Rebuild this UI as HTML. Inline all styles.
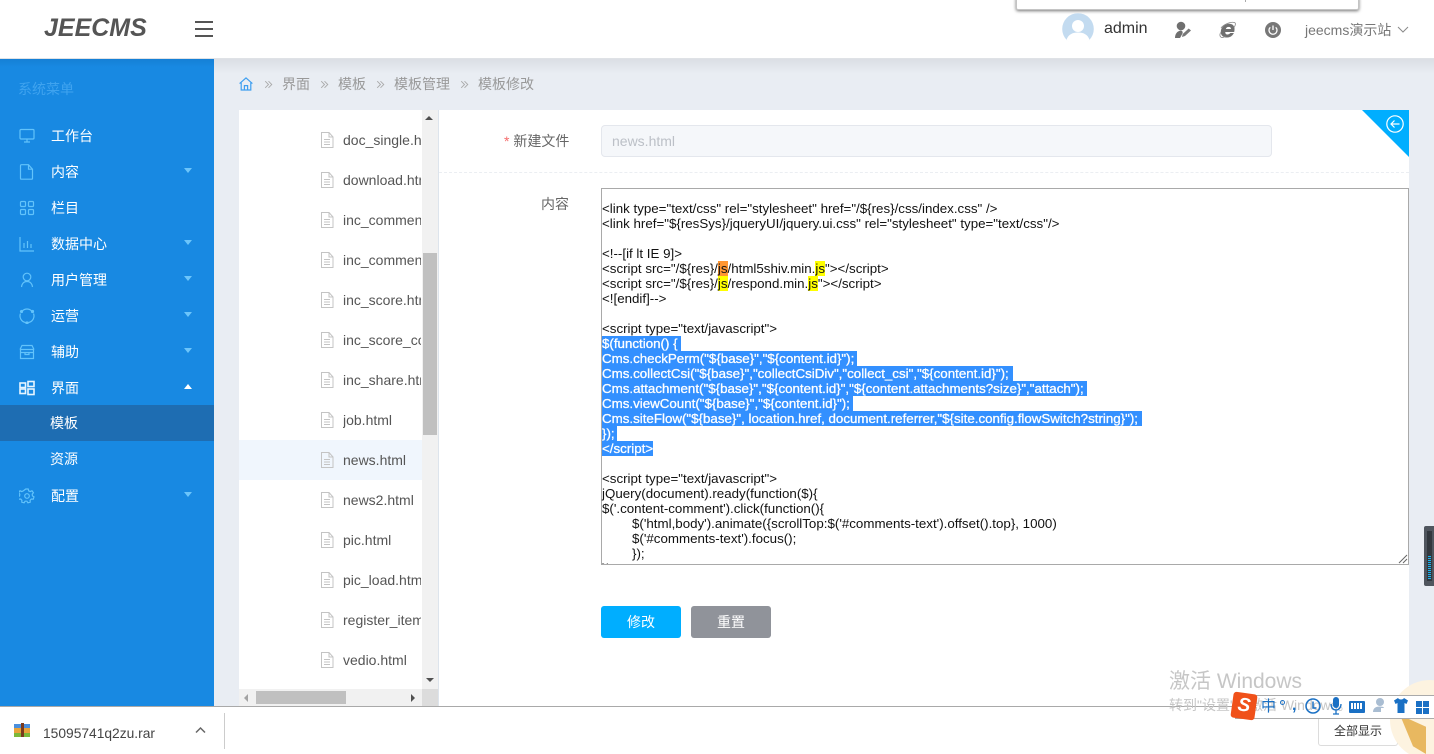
<!DOCTYPE html>
<html lang="zh"><head><meta charset="utf-8"><title>JEECMS</title>
<style>
html,body{margin:0;padding:0;width:1434px;height:754px;overflow:hidden;background:#e9edf3}
body{font-family:"Liberation Sans","Noto Sans CJK SC",sans-serif;position:relative}
div,span,svg{position:absolute;box-sizing:border-box}
.t{white-space:nowrap}
.m{left:51px;color:#fff;font-size:14px;line-height:20px;height:20px}
.mi{left:19px;width:16px;height:16px;fill:none;stroke:#62c3fb;stroke-width:1.2}
.ar{left:184px;width:0;height:0;border-left:4px solid transparent;border-right:4px solid transparent;border-top:5px solid #6cc5fb}
.bc{top:75px;font-size:14px;line-height:18px;color:#999}
.bs{top:80px;width:9px;height:9px;fill:none;stroke:#aaa;stroke-width:1.1}
.f{left:343px;width:78px;overflow:hidden;font-size:14px;line-height:20px;color:#555;white-space:nowrap}
.fi{left:320px;width:14px;height:16px;fill:none;stroke:#c4c4c4;stroke-width:1}
.l{left:602px;font-size:13.33px;line-height:15px;height:15px;color:#111;white-space:pre}
.s{left:602px;height:15px;background:#3390ff}
.w{color:#fff;-webkit-text-stroke:.3px #fff}
mark{background:#ff0;color:#111}
</style></head><body>

<!-- main page content -->
<div style="left:214px;top:58px;width:1220px;height:30px;background:linear-gradient(#dadde3,#e9edf3 16px)"></div>

<!-- breadcrumb -->
<svg style="left:239px;top:77px;width:14px;height:14px;fill:none;stroke:#3f9ff0;stroke-width:1.2" viewBox="0 0 14 14"><path d="M.6 6.6 7 .9l6.4 5.7M2.200 5.800V13h9.600V5.800M5.400 13V8.600h3.200V13"/></svg>
<svg class="bs" style="left:264px" viewBox="0 0 10 11"><path d="M1 1.500 5 5.500 1 9.500M5 1.500 9 5.500 5 9.500"/></svg>
<div class="bc t" style="left:282px">界面</div>
<svg class="bs" style="left:320px" viewBox="0 0 10 11"><path d="M1 1.500 5 5.500 1 9.500M5 1.500 9 5.500 5 9.500"/></svg>
<div class="bc t" style="left:338px">模板</div>
<svg class="bs" style="left:376px" viewBox="0 0 10 11"><path d="M1 1.500 5 5.500 1 9.500M5 1.500 9 5.500 5 9.500"/></svg>
<div class="bc t" style="left:394px">模板管理</div>
<svg class="bs" style="left:460px" viewBox="0 0 10 11"><path d="M1 1.500 5 5.500 1 9.500M5 1.500 9 5.500 5 9.500"/></svg>
<div class="bc t" style="left:478px">模板修改</div>

<!-- file tree panel -->
<div style="left:239px;top:110px;width:200px;height:597px;background:#fff"></div>
<div style="left:239px;top:440px;width:183px;height:40px;background:#f0f6fd"></div>
<div style="left:422px;top:110px;width:17px;height:579px;background:#f1f1f1"></div>
<div style="left:423px;top:253px;width:14px;height:182px;background:#c0c0c0"></div>
<div style="left:425px;top:116px;width:0;height:0;border-left:4px solid transparent;border-right:4px solid transparent;border-bottom:4px solid #505050"></div>
<div style="left:426px;top:678px;width:0;height:0;border-left:4px solid transparent;border-right:4px solid transparent;border-top:4px solid #505050"></div>
<div style="left:239px;top:689px;width:183px;height:18px;background:#f1f1f1"></div>
<div style="left:256px;top:691px;width:90px;height:13px;background:#c0c0c0"></div>
<div style="left:244px;top:694px;width:0;height:0;border-top:4px solid transparent;border-bottom:4px solid transparent;border-right:4px solid #a3a3a3"></div>
<div style="left:411px;top:694px;width:0;height:0;border-top:4px solid transparent;border-bottom:4px solid transparent;border-left:4px solid #505050"></div>
<div style="left:422px;top:689px;width:17px;height:18px;background:#dcdcdc"></div>
<div style="left:438px;top:110px;width:1px;height:597px;background:#dde4ec"></div>

<svg class="fi" style="top:132px" viewBox="0 0 14 16"><path d="M1.500.5h7.500l4 4.500v10.500h-11.500zM9 .5V5h4M4 7.500h6M4 10h6M4 12.500h6"/></svg><div class="f" style="top:130px">doc_single.html</div>
<svg class="fi" style="top:172px" viewBox="0 0 14 16"><path d="M1.500.5h7.500l4 4.500v10.500h-11.500zM9 .5V5h4M4 7.500h6M4 10h6M4 12.500h6"/></svg><div class="f" style="top:170px">download.html</div>
<svg class="fi" style="top:212px" viewBox="0 0 14 16"><path d="M1.500.5h7.500l4 4.500v10.500h-11.500zM9 .5V5h4M4 7.500h6M4 10h6M4 12.500h6"/></svg><div class="f" style="top:210px">inc_comment.html</div>
<svg class="fi" style="top:252px" viewBox="0 0 14 16"><path d="M1.500.5h7.500l4 4.500v10.500h-11.500zM9 .5V5h4M4 7.500h6M4 10h6M4 12.500h6"/></svg><div class="f" style="top:250px">inc_comment2.html</div>
<svg class="fi" style="top:292px" viewBox="0 0 14 16"><path d="M1.500.5h7.500l4 4.500v10.500h-11.500zM9 .5V5h4M4 7.500h6M4 10h6M4 12.500h6"/></svg><div class="f" style="top:290px">inc_score.html</div>
<svg class="fi" style="top:332px" viewBox="0 0 14 16"><path d="M1.500.5h7.500l4 4.500v10.500h-11.500zM9 .5V5h4M4 7.500h6M4 10h6M4 12.500h6"/></svg><div class="f" style="top:330px">inc_score_count.html</div>
<svg class="fi" style="top:372px" viewBox="0 0 14 16"><path d="M1.500.5h7.500l4 4.500v10.500h-11.500zM9 .5V5h4M4 7.500h6M4 10h6M4 12.500h6"/></svg><div class="f" style="top:370px">inc_share.html</div>
<svg class="fi" style="top:412px" viewBox="0 0 14 16"><path d="M1.500.5h7.500l4 4.500v10.500h-11.500zM9 .5V5h4M4 7.500h6M4 10h6M4 12.500h6"/></svg><div class="f" style="top:410px">job.html</div>
<svg class="fi" style="top:452px" viewBox="0 0 14 16"><path d="M1.500.5h7.500l4 4.500v10.500h-11.500zM9 .5V5h4M4 7.500h6M4 10h6M4 12.500h6"/></svg><div class="f" style="top:450px">news.html</div>
<svg class="fi" style="top:492px" viewBox="0 0 14 16"><path d="M1.500.5h7.500l4 4.500v10.500h-11.500zM9 .5V5h4M4 7.500h6M4 10h6M4 12.500h6"/></svg><div class="f" style="top:490px">news2.html</div>
<svg class="fi" style="top:532px" viewBox="0 0 14 16"><path d="M1.500.5h7.500l4 4.500v10.500h-11.500zM9 .5V5h4M4 7.500h6M4 10h6M4 12.500h6"/></svg><div class="f" style="top:530px">pic.html</div>
<svg class="fi" style="top:572px" viewBox="0 0 14 16"><path d="M1.500.5h7.500l4 4.500v10.500h-11.500zM9 .5V5h4M4 7.500h6M4 10h6M4 12.500h6"/></svg><div class="f" style="top:570px">pic_load.html</div>
<svg class="fi" style="top:612px" viewBox="0 0 14 16"><path d="M1.500.5h7.500l4 4.500v10.500h-11.500zM9 .5V5h4M4 7.500h6M4 10h6M4 12.500h6"/></svg><div class="f" style="top:610px">register_item.html</div>
<svg class="fi" style="top:652px" viewBox="0 0 14 16"><path d="M1.500.5h7.500l4 4.500v10.500h-11.500zM9 .5V5h4M4 7.500h6M4 10h6M4 12.500h6"/></svg><div class="f" style="top:650px">vedio.html</div>

<!-- form panel -->
<div style="left:439px;top:110px;width:970px;height:597px;background:#fff"></div>
<div style="left:1362px;top:110px;width:47px;height:47px;background:#00aeff;clip-path:polygon(0 0,100% 0,100% 100%)"></div>
<svg style="left:1386px;top:115px;width:18px;height:18px;fill:none;stroke:#fff;stroke-width:1.200" viewBox="0 0 18 18"><circle cx="9" cy="9" r="8.200"/><path d="M13.500 9H5M8.500 5.500 5 9l3.500 3.500"/></svg>
<div class="t" style="left:504px;top:132px;font-size:14px;line-height:18px;color:#666"><span style="position:static;color:#f56c6c">*</span> 新建文件</div>
<div style="left:601px;top:125px;width:671px;height:32px;background:#f5f7fa;border:1px solid #e4e7ed;border-radius:4px"></div>
<div class="t" style="left:612px;top:132px;font-size:14px;line-height:18px;color:#bcc0c7">news.html</div>
<div style="left:439px;top:172px;width:970px;height:0;border-top:1px dashed #ebeef2"></div>
<div class="t" style="left:541px;top:195px;font-size:14px;line-height:18px;color:#666">内容</div>

<!-- textarea -->
<div style="left:601px;top:188px;width:808px;height:377px;border:1px solid #a9a9a9;background:#fff"></div>
<div class="l" style="top:201px">&lt;link type="text/css" rel="stylesheet" href="/${res}/css/index.css" /&gt;</div>
<div class="l" style="top:216px">&lt;link href="${resSys}/jqueryUI/jquery.ui.css" rel="stylesheet" type="text/css"/&gt;</div>
<div class="l" style="top:246px">&lt;!--[if lt IE 9]&gt;</div>
<div class="l" style="top:261px">&lt;script src="/${res}/<mark style="background:#ff9632">js</mark>/html5shiv.min.<mark>js</mark>"&gt;&lt;/script&gt;</div>
<div class="l" style="top:276px">&lt;script src="/${res}/<mark>js</mark>/respond.min.<mark>js</mark>"&gt;&lt;/script&gt;</div>
<div class="l" style="top:291px">&lt;![endif]--&gt;</div>
<div class="l" style="top:321px">&lt;script type="text/javascript"&gt;</div>
<div class="s" style="top:336px;width:79px"></div>
<div class="s" style="top:351px;width:255px"></div>
<div class="s" style="top:366px;width:411px"></div>
<div class="s" style="top:381px;width:485px"></div>
<div class="s" style="top:396px;width:251px"></div>
<div class="s" style="top:411px;width:540px"></div>
<div class="s" style="top:426px;width:15px"></div>
<div class="s" style="top:441px;width:51px"></div>
<div class="l w" style="top:336px">$(function() {</div>
<div class="l w" style="top:351px">Cms.checkPerm("${base}","${content.id}");</div>
<div class="l w" style="top:366px">Cms.collectCsi("${base}","collectCsiDiv","collect_csi","${content.id}");</div>
<div class="l w" style="top:381px">Cms.attachment("${base}","${content.id}","${content.attachments?size}","attach");</div>
<div class="l w" style="top:396px">Cms.viewCount("${base}","${content.id}");</div>
<div class="l w" style="top:411px">Cms.siteFlow("${base}", location.href, document.referrer,"${site.config.flowSwitch?string}");</div>
<div class="l w" style="top:426px">});</div>
<div class="l w" style="top:441px">&lt;/script&gt;</div>
<div class="l" style="top:471px">&lt;script type="text/javascript"&gt;</div>
<div class="l" style="top:486px">jQuery(document).ready(function($){</div>
<div class="l" style="top:501px">$('.content-comment').click(function(){</div>
<div class="l" style="top:516px;left:632px">$('html,body').animate({scrollTop:$('#comments-text').offset().top}, 1000)</div>
<div class="l" style="top:531px;left:632px">$('#comments-text').focus();</div>
<div class="l" style="top:546px;left:632px">});</div>
<div class="l" style="top:561px;height:3px;overflow:hidden">});</div>
<svg style="left:1398px;top:554px;width:10px;height:10px;stroke:#666;stroke-width:1;fill:none" viewBox="0 0 10 10"><path d="M1 9 9 1M5 9 9 5"/></svg>

<!-- buttons -->
<div style="left:601px;top:606px;width:80px;height:32px;background:#00aeff;border-radius:3px;color:#fff;font-size:14px;line-height:32px;text-align:center">修改</div>
<div style="left:691px;top:606px;width:80px;height:32px;background:#90939a;border-radius:3px;color:#fff;font-size:14px;line-height:32px;text-align:center">重置</div>

<!-- sidebar -->
<div style="left:0;top:58px;width:214px;height:649px;background:#1889e2"></div>
<div style="left:0;top:59px;width:214px;height:8px;background:linear-gradient(rgba(0,60,120,.12),rgba(0,60,120,0))"></div>
<div style="left:0;top:405px;width:214px;height:36px;background:#1e6db2"></div>
<div class="t" style="left:18px;top:80px;font-size:14px;line-height:18px;color:#3fa3ef">系统菜单</div>

<svg class="mi" style="top:128px" viewBox="0 0 16 16"><rect x="1" y="1.500" width="14" height="9.500" rx="1"/><path d="M5 14h6M8 11v3"/></svg><div class="m t" style="top:126px">工作台</div>
<svg class="mi" style="top:164px" viewBox="0 0 16 16"><path d="M2.500.7h7l4 4.500v9c0 .6-.4 1-1 1h-10c-.6 0-1-.4-1-1V1.700c0-.6.400-1 1-1zM9.500.7v4.500h4"/></svg><div class="m t" style="top:162px">内容</div><div class="ar" style="top:168px"></div>
<svg class="mi" style="top:200px" viewBox="0 0 16 16"><rect x="1.500" y="1.500" width="5" height="5" rx="1"/><rect x="9.500" y="1.500" width="5" height="5" rx="1"/><rect x="1.500" y="9.500" width="5" height="5" rx="1"/><rect x="9.500" y="9.500" width="5" height="5" rx="1"/></svg><div class="m t" style="top:198px">栏目</div>
<svg class="mi" style="top:236px" viewBox="0 0 16 16"><path d="M1 1v14h14M5 12V7M8.500 12V5M12 12V8"/></svg><div class="m t" style="top:234px">数据中心</div><div class="ar" style="top:240px"></div>
<svg class="mi" style="top:272px" viewBox="0 0 16 16"><circle cx="8" cy="5" r="3.800"/><path d="M2.500 15c.4-3.500 2.500-5.500 5.500-5.500s5.100 2 5.500 5.500"/></svg><div class="m t" style="top:270px">用户管理</div><div class="ar" style="top:276px"></div>
<svg class="mi" style="top:308px" viewBox="0 0 16 16"><path d="M3.500 2.800A6.600 6.600 0 0 1 12.500 2.800M14.500 5.500A6.600 6.600 0 0 1 9.500 14.500M6.500 14.500A6.600 6.600 0 0 1 1.500 5.500"/><circle cx="2.500" cy="3.500" r="1" fill="#62c3fb"/><circle cx="13.500" cy="3.500" r="1" fill="#62c3fb"/><circle cx="8" cy="15" r="1" fill="#62c3fb"/></svg><div class="m t" style="top:306px">运营</div><div class="ar" style="top:312px"></div>
<svg class="mi" style="top:344px" viewBox="0 0 16 16"><path d="M1.500 5.500h13v9h-13zM1 5.500 3 1.500h10l2 4M1.500 8.500h13M6 8.500v2h4v-2"/></svg><div class="m t" style="top:342px">辅助</div><div class="ar" style="top:348px"></div>
<svg class="mi" style="top:380px;stroke:#e8f5ff;stroke-width:1.600" viewBox="0 0 16 16"><rect x="1" y="3" width="5.500" height="4.500"/><rect x="1" y="9" width="5.500" height="4.500"/><rect x="9" y="1.500" width="6" height="5"/><rect x="9" y="9" width="6" height="5.500"/></svg><div class="m t" style="top:378px">界面</div><div class="ar" style="top:384px;border-top:0;border-bottom:5px solid #fff"></div>
<div class="m t" style="left:50px;top:413px">模板</div>
<div class="m t" style="left:50px;top:449px">资源</div>
<svg class="mi" style="top:488px" viewBox="0 0 16 16"><circle cx="8" cy="8" r="2.300"/><path d="M6.800 1h2.400l.5 1.900 1.500.7 1.800-.8 1.400 1.900-1.200 1.500.2 1.700 1.600 1-.8 2.300-1.900-.2-1.200 1.300.1 1.900-2.300.6-1-1.600h-1.800l-1 1.600-2.300-.6.1-1.900-1.200-1.300-1.900.2-.8-2.300 1.600-1 .2-1.700-1.200-1.500 1.400-1.900 1.800.8 1.500-.7z"/></svg><div class="m t" style="top:486px">配置</div><div class="ar" style="top:492px"></div>

<!-- header -->
<div style="left:0;top:0;width:1434px;height:59px;background:#fff;border-bottom:1px solid #dfe2e6"></div>
<div class="t" style="left:44px;top:12px;font-size:25px;line-height:32px;font-weight:bold;font-style:italic;color:#555">JEECMS</div>
<div style="left:195px;top:21px;width:18px;height:2px;background:#555"></div>
<div style="left:195px;top:28px;width:18px;height:2px;background:#555"></div>
<div style="left:195px;top:35px;width:18px;height:2px;background:#555"></div>

<div style="left:1016px;top:-4px;width:343px;height:14px;background:#fff;border:1px solid #c4c4c4;border-radius:2px;box-shadow:0 1px 3px rgba(0,0,0,.55)"></div>
<div style="left:1245px;top:0;width:1px;height:2px;background:#aaa"></div>

<svg style="left:1062px;top:13px;width:32px;height:32px" viewBox="0 0 32 32"><circle cx="16" cy="16" r="15.800" fill="#c3dbf0"/><circle cx="16" cy="13" r="6" fill="#fff"/><path d="M4.500 27c1.500-5.500 6-7.500 11.500-7.500S26 21.500 27.500 27a15 15 0 0 1-23 0z" fill="#fff"/></svg>
<div class="t" style="left:1104px;top:19px;font-size:16px;line-height:20px;color:#333">admin</div>
<svg style="left:1174px;top:21px;width:18px;height:18px" viewBox="0 0 18 18"><circle cx="7" cy="5" r="4.300" fill="#6f6f6f"/><path d="M1 17c0-4 2-7 6-7.500 1.500.5 2 1.500 1.500 3L6 17z" fill="#6f6f6f"/><path d="M8 16l.7-3 6-5.500 2.300 2-6 5.500z" fill="#777"/></svg>
<svg style="left:1219px;top:21px;width:18px;height:18px" viewBox="0 0 18 18"><g transform="translate(2 0) skewX(-8)"><path d="M1.500 10c0-4.500 3.500-7 7-7 3.800 0 6 2.600 6 6.500v1.300H5.500c.2 2 1.500 3 3 3 1.200 0 2-.5 2.700-1.500h3c-1 2.800-3.300 4-5.800 4-3.800 0-6.900-2.300-6.900-6.300zM5.600 8.300h5.800c-.1-1.600-1.300-2.700-2.900-2.700-1.500 0-2.700 1.100-2.900 2.700z" fill="#6f6f6f" stroke="#6f6f6f" stroke-width=".5"/></g><path d="M2 7C5 3 12 .5 15.500 1.500c1.500.6 1 3-.5 5M1.500 11.500C.5 14 .8 16 2.500 16.500c1.500.3 3-.5 4-1.200" fill="none" stroke="#888" stroke-width=".8"/></svg>
<svg style="left:1265px;top:22px;width:16px;height:16px" viewBox="0 0 16 16"><circle cx="8" cy="8" r="8" fill="#777"/><path d="M5.300 5.300a4 4 0 1 0 5.400 0" fill="none" stroke="#fff" stroke-width="1.300"/><path d="M8 3.500v4.500" stroke="#fff" stroke-width="1.300"/></svg>
<div class="t" style="left:1305px;top:21px;font-size:14px;line-height:18px;color:#777">jeecms演示站</div>
<svg style="left:1397px;top:26px;width:12px;height:8px;fill:none;stroke:#8a8a8a;stroke-width:1" viewBox="0 0 12 8"><path d="M1 1l5 5 5-5"/></svg>

<!-- meter at right -->
<div style="left:1424px;top:526px;width:10px;height:60px;background:#50565e;border-radius:2px 0 0 2px"></div>
<div style="left:1427px;top:531px;width:5px;height:50px;background:#33383e"></div>
<div style="left:1428px;top:556px;width:3px;height:24px;background:repeating-linear-gradient(#17b3f0 0 1px,#33383e 1px 2px)"></div>

<!-- download bar -->
<div style="left:0;top:706px;width:1434px;height:48px;background:#fff;border-top:1px solid #a9a9a9"></div>
<svg style="left:14px;top:723px;width:16px;height:15px" viewBox="0 0 16 15"><rect x="0" y="1" width="16" height="5" fill="#4b8fdc"/><rect x="0" y="5" width="16" height="6" fill="#e8a33a"/><rect x="0" y="10" width="16" height="4" fill="#7cb83a"/><rect x="7" y="0" width="3" height="14" fill="#7a3a1c"/></svg>
<div class="t" style="left:43px;top:725px;font-size:13.8px;line-height:18px;color:#444">15095741q2zu.rar</div>
<svg style="left:195px;top:726px;width:11px;height:8px;fill:none;stroke:#666;stroke-width:1.500" viewBox="0 0 11 8"><path d="M1 6.500 5.500 2 10 6.500"/></svg>
<div style="left:224px;top:713px;width:1px;height:36px;background:#ccc"></div>

<!-- full display button -->
<div style="left:1318px;top:716px;width:80px;height:30px;background:#fff;border:1px solid #dcdcdc;border-radius:3px"></div>
<div class="t" style="left:1334px;top:722px;font-size:12px;line-height:18px;color:#333">全部显示</div>

<!-- decoration corner -->
<div style="left:1390px;top:680px;width:80px;height:80px;border-radius:50%;background:#fdf3e0"></div>
<div style="left:1400px;top:715px;width:26px;height:39px;background:#e8b860;clip-path:polygon(0 0,100% 30%,100% 100%,50% 80%)"></div>

<!-- IME bar background -->
<div style="left:1235px;top:695px;width:199px;height:24px;border:1px solid #aaa;border-right:0;background:#fff"></div>

<!-- windows watermark -->
<div class="t" style="left:1169px;top:670px;font-size:21px;line-height:24px;color:#c6c6c6">激活 Windows</div>
<div class="t" style="left:1169px;top:696px;font-size:14px;line-height:18px;color:#c6c6c6">转到"设置"以激活 Windows。</div>

<!-- IME toolbar -->
<div style="left:1232px;top:693px;width:24px;height:26px;background:#f0511a;border-radius:3px;transform:rotate(8deg);color:#fff;font-size:19px;font-weight:bold;line-height:25px;text-align:center;font-style:italic">S</div>
<div class="t" style="left:1261px;top:698px;font-size:15px;line-height:18px;color:#1a70c4">中</div>
<div style="left:1280px;top:700px;width:5px;height:5px;border:1px solid #1a70c4;border-radius:50%"></div>
<div class="t" style="left:1292px;top:697px;font-size:16px;line-height:18px;color:#1a70c4;font-weight:bold">,</div>
<svg style="left:1305px;top:698px;width:16px;height:16px;fill:none;stroke:#1a70c4;stroke-width:1.500" viewBox="0 0 16 16"><circle cx="8" cy="8" r="7"/><path d="M8 3.500V10h3.500"/></svg>
<svg style="left:1330px;top:697px;width:12px;height:18px" viewBox="0 0 12 18"><rect x="3" y="0" width="6" height="11" rx="3" fill="#1a70c4"/><path d="M1 7c0 3.500 2 6 5 6s5-2.500 5-6M6 13v4M3 17h6" fill="none" stroke="#1a70c4" stroke-width="1.300"/></svg>
<div style="left:1349px;top:701px;width:16px;height:12px;background:#1a70c4;border-radius:1px"></div>
<div style="left:1351px;top:703px;width:12px;height:6px;background:repeating-linear-gradient(90deg,#fff 0 2px,#1a70c4 2px 3px)"></div>
<svg style="left:1373px;top:697px;width:16px;height:18px" viewBox="0 0 16 18"><circle cx="7" cy="5" r="4" fill="#a9bdd2"/><path d="M0 15c0-4 3-5.500 7-5.500s5 1.500 5 5.500z" fill="#a9bdd2"/><rect x="8" y="11" width="8" height="6" fill="#fff"/></svg>
<svg style="left:1394px;top:698px;width:14px;height:15px" viewBox="0 0 14 15"><path d="M4 0 0 2.500 1.500 6 3.500 5V15h7V5l2 1L14 2.500 10 0C9 2 5 2 4 0z" fill="#1a70c4"/></svg>
<div style="left:1416px;top:701px;width:6px;height:6px;background:#1a70c4"></div>
<div style="left:1423px;top:701px;width:6px;height:6px;background:#1a70c4"></div>
<div style="left:1416px;top:708px;width:6px;height:6px;background:#1a70c4"></div>
<div style="left:1423px;top:708px;width:6px;height:6px;background:#1a70c4"></div>

</body></html>
